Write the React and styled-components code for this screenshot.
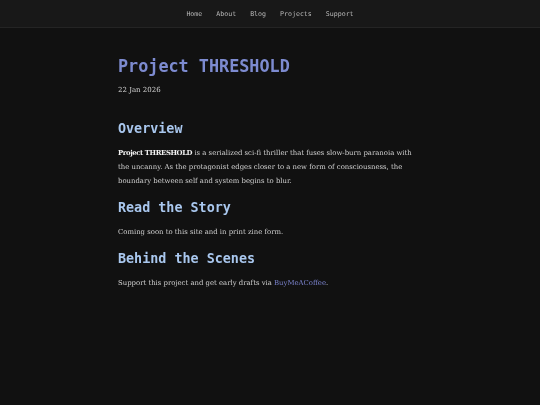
import styled, { createGlobalStyle } from "styled-components"

const GlobalStyle = createGlobalStyle`
  html, body {
    margin: 0;
    padding: 0;
    background: #111111;
  }
  body {
    min-height: 100vh;
    -webkit-font-smoothing: antialiased;
  }
`

const links = ["Home", "About", "Blog", "Projects", "Support"]

function App() {
  return (
    <>
      <GlobalStyle />
      <Page>
        <Header>
          <Nav>
            {links.map((l) => (
              <NavLink key={l} href="#">{l}</NavLink>
            ))}
          </Nav>
        </Header>
        <Main>
          <Title>Project THRESHOLD</Title>
          <DateLine>22 Jan 2026</DateLine>

          <Heading>Overview</Heading>
          <Text>
            <strong>Project THRESHOLD</strong> is a serialized sci-fi thriller that fuses slow-burn paranoia with
            the uncanny. As the protagonist edges closer to a new form of consciousness, the
            boundary between self and system begins to blur.
          </Text>

          <Heading>Read the Story</Heading>
          <Text>Coming soon to this site and in print zine form.</Text>

          <Heading>Behind the Scenes</Heading>
          <Text>
            Support this project and get early drafts via <Link href="#">BuyMeACoffee</Link>.
          </Text>
        </Main>
      </Page>
    </>
  )
}

const Page = styled.div`
  min-height: 100vh;
  background: #111111;
`

const Header = styled.header`
  height: 27px;
  background: #181818;
  border-bottom: 1px solid #242424;
  display: flex;
  align-items: center;
  justify-content: center;
  will-change: transform;
`

const Nav = styled.nav`
  display: flex;
  gap: 14px;
`

const NavLink = styled.a`
  font-family: "DejaVu Sans Mono", monospace;
  font-size: 6.6px;
  color: #b8b8b8;
  text-decoration: none;
`

const Main = styled.main`
  max-width: 304px;
  margin: 0 auto;
  padding-top: 28px;
  will-change: transform;
`

const Title = styled.h1`
  margin: 0;
  font-family: "DejaVu Sans Mono", monospace;
  font-size: 16.8px;
  line-height: 20px;
  font-weight: 700;
  color: #7d8bd0;
`

const DateLine = styled.p`
  margin: 8px 0 25px;
  font-family: "DejaVu Serif", serif;
  font-size: 7px;
  line-height: 12px;
  color: #d4d4d4;
`

const Heading = styled.h2`
  margin: 12px 0 9px;
  font-family: "DejaVu Sans Mono", monospace;
  font-size: 13.4px;
  line-height: 16px;
  font-weight: 700;
  color: #a9c7ee;
`

const Text = styled.p`
  margin: 0;
  font-family: "DejaVu Serif", serif;
  font-size: 6.9px;
  line-height: 14px;
  color: #d2d2d2;

  strong {
    color: #f2f2f2;
    font-weight: 700;
    letter-spacing: -0.4px;
  }
`

const Link = styled.a`
  color: #7a82cc;
  text-decoration: none;
`

export default App
